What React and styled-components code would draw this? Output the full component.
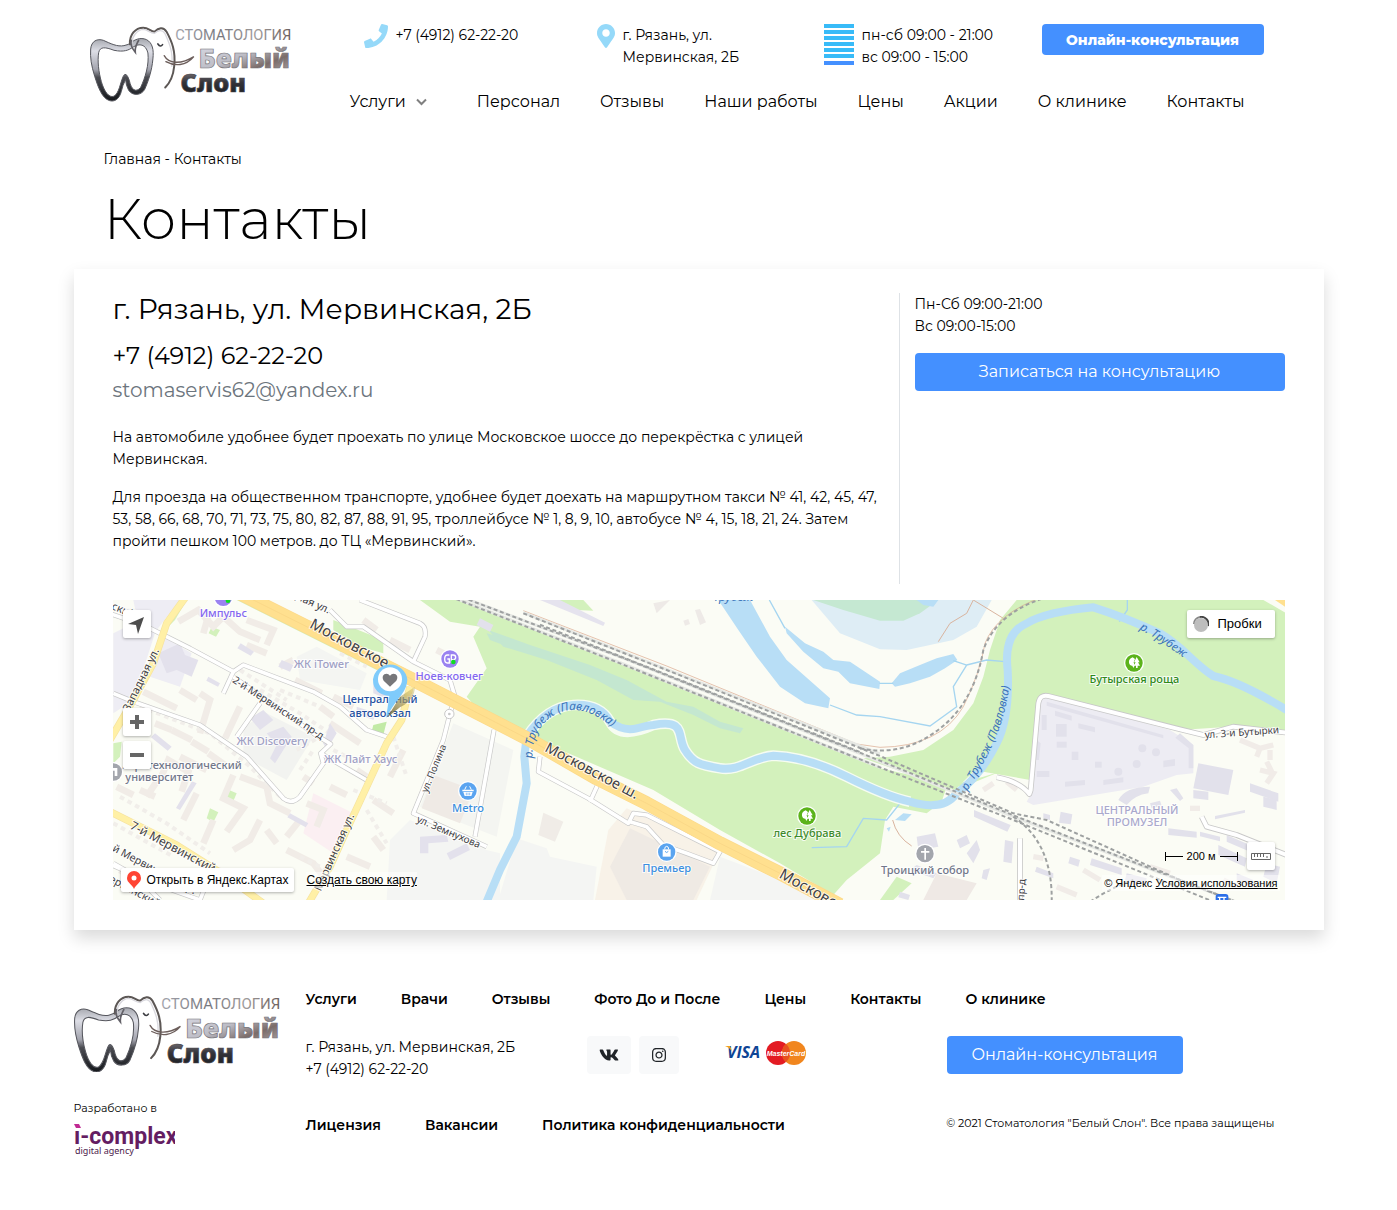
import styled, { createGlobalStyle } from "styled-components";
import { FaPhone, FaMapMarkerAlt, FaVk, FaInstagram } from "react-icons/fa";

const menu = ["Персонал", "Отзывы", "Наши работы", "Цены", "Акции", "О клинике", "Контакты"]
const footerMenu = ["Услуги", "Врачи", "Отзывы", "Фото До и После", "Цены", "Контакты", "О клинике"]
const documents = ["Лицензия", "Вакансии", "Политика конфиденциальности"]

export default function App() {
    return (
        <>
            <GlobalStyle />
            <Container>
                <Header />
                <main>
                    <Breadcrumbs aria-label="Навигация">
                        <a href="#">Главная</a> - <span>Контакты</span>
                    </Breadcrumbs>
                    <Title>Контакты</Title>
                    <ContactCard />
                </main>
                <Footer />
            </Container>
        </>
    )
}

function Header() {
    return (
        <HeaderBody>
            <HeaderLogo href="#"><Logo id="head" /></HeaderLogo>
            <div>
                <TopBar>
                    <TopItem>
                        <FaPhone size={24} color="#95d9f9" />
                        <a href="tel:+74912622220">+7 (4912) 62-22-20</a>
                    </TopItem>
                    <TopItem>
                        <MarkerIcon size={24} color="#95d9f9" />
                        <Address>г. Рязань, ул. Мервинская, 2Б</Address>
                    </TopItem>
                    <TopItem>
                        <svg width="30" height="41" aria-hidden="true">
                            {[0, 6, 12, 18, 24, 30].map((y) => <rect key={y} y={y} width="30" height="4" fill="#38bbf8" />)}
                            <rect y="37" width="30" height="4" fill="#4490ff" />
                        </svg>
                        <p>пн-сб 09:00 - 21:00<br />вс 09:00 - 15:00</p>
                    </TopItem>
                    <SmallButton type="button">Онлайн-консультация</SmallButton>
                </TopBar>
                <Nav>
                    <NavToggle type="button" aria-haspopup="true">
                        Услуги
                        <svg width="11" height="8" viewBox="0 0 11 8" aria-hidden="true">
                            <path d="M1 1.5 5.5 6 10 1.5" fill="none" stroke="#808080" strokeWidth="2" />
                        </svg>
                    </NavToggle>
                    {menu.map((item) => <a key={item} href="#">{item}</a>)}
                </Nav>
            </div>
        </HeaderBody>
    )
}

function ContactCard() {
    return (
        <Card>
            <CardColumns>
                <Info>
                    <h2>г. Рязань, ул. Мервинская, 2Б</h2>
                    <Phone href="tel:+74912622220">+7 (4912) 62-22-20</Phone>
                    <Mail href="mailto:stomaservis62@yandex.ru">stomaservis62@yandex.ru</Mail>
                    <p>
                        На автомобиле удобнее будет проехать по улице Московское шоссе до перекрёстка с улицей
                        Мервинская.
                    </p>
                    <p>
                        Для проезда на общественном транспорте, удобнее будет доехать на маршрутном такси № 41, 42, 45, 47,
                        53, 58, 66, 68, 70, 71, 73, 75, 80, 82, 87, 88, 91, 95, троллейбусе № 1, 8, 9, 10, автобусе № 4, 15, 18, 21, 24. Затем
                        пройти пешком 100 метров. до ТЦ «Мервинский».
                    </p>
                </Info>
                <Schedule>
                    <p>Пн-Сб 09:00-21:00<br />Вс 09:00-15:00</p>
                    <Button type="button">Записаться на консультацию</Button>
                </Schedule>
            </CardColumns>
            <MapBlock />
        </Card>
    )
}

function Footer() {
    return (
        <FooterBody>
            <FooterSide>
                <a href="#"><Logo id="foot" /></a>
                <Developer href="#">
                    Разработано в
                    <AgencyLogo />
                </Developer>
            </FooterSide>
            <div>
                <FooterNav>
                    {footerMenu.map((item) => <a key={item} href="#">{item}</a>)}
                </FooterNav>
                <FooterRow>
                    <p>г. Рязань, ул. Мервинская, 2Б<br />+7 (4912) 62-22-20</p>
                    <Social>
                        <a href="#" aria-label="ВКонтакте"><FaVk size={20} /></a>
                        <a href="#" aria-label="Instagram"><FaInstagram size={16} /></a>
                    </Social>
                    <Cards />
                    <Button type="button">Онлайн-консультация</Button>
                </FooterRow>
                <FooterBottom>
                    <FooterNav>
                        {documents.map((item) => <a key={item} href="#">{item}</a>)}
                    </FooterNav>
                    <small>© 2021 Стоматология "Белый Слон". Все права защищены</small>
                </FooterBottom>
            </div>
        </FooterBody>
    )
}

function Logo({ id }) {
    return (
        <svg viewBox="58 42 604 230" width="100%" role="img" aria-label="Стоматология Белый Слон">
            <defs>
                <linearGradient id={id + "-tooth"} x1="0" y1="0" x2="0" y2="1">
                    <stop offset="0" stopColor="#a5a7ae" />
                    <stop offset=".2" stopColor="#dddee6" />
                    <stop offset=".5" stopColor="#a2a3ad" />
                    <stop offset=".62" stopColor="#4b4c52" />
                    <stop offset="1" stopColor="#15181c" />
                </linearGradient>
                <linearGradient id={id + "-word"} x1="0" y1="0" x2="1" y2="0">
                    <stop offset="0" stopColor="#a3a4ac" />
                    <stop offset=".4" stopColor="#77777e" />
                    <stop offset=".7" stopColor="#a09c9c" />
                    <stop offset="1" stopColor="#6c5f5c" />
                </linearGradient>
                <linearGradient id={id + "-white"} x1="0" y1="0" x2="1" y2="1">
                    <stop offset="0" stopColor="#dcdce6" />
                    <stop offset=".45" stopColor="#bdbdc6" />
                    <stop offset=".7" stopColor="#7b6c69" />
                    <stop offset="1" stopColor="#b5aeb0" />
                </linearGradient>
                <linearGradient id={id + "-dark"} x1="0" y1="0" x2="0" y2="1">
                    <stop offset="0" stopColor="#9c9498" />
                    <stop offset=".5" stopColor="#34343a" />
                    <stop offset="1" stopColor="#12161a" />
                </linearGradient>
            </defs>
            <path
                fill={"url(#" + id + "-tooth)"} stroke="#55565d" strokeWidth="3" fillRule="evenodd"
                d="M60 114C62 90 80 82 98 88C120 98 140 108 160 104Q174 102 182 94C198 82 214 80 228 86C246 96 250 116 247 144C244 180 232 214 222 236C212 254 186 256 174 238Q166 224 165 206Q156 222 152 242C146 266 130 274 116 269C94 262 82 228 72 196C62 164 58 140 60 114ZM84 125C80 150 84 184 92 212C100 240 114 262 130 256C146 246 148 218 158 196Q166 180 176 208C182 238 196 246 210 230C224 200 236 162 232 126C226 100 206 96 188 108C174 118 160 124 130 118C104 108 88 106 84 125Z"
            />
            <g fill="none" strokeLinecap="round">
                <path d="M178 100C176 72 194 50 218 50C234 50 240 62 252 62C264 50 278 46 288 62C304 92 316 120 311 166C308 196 296 218 284 230" stroke="#5c5755" strokeWidth="6" />
                <path d="M184 96C184 76 200 56 218 55C232 56 238 67 252 67C262 58 274 54 283 67C297 98 308 122 304 166" stroke="#d9d8de" strokeWidth="4" />
                <path d="M182 88C178 102 184 112 194 124C192 108 198 100 204 88" stroke="#626067" strokeWidth="5" />
                <path d="M262 99Q270 110 276 101" stroke="#3c3d42" strokeWidth="5" />
                <path d="M281 134C294 158 330 162 370 137C346 166 312 166 286 152" stroke="#6c5e5b" strokeWidth="4" />
            </g>
            <text x="314" y="86" fontFamily="Roboto, sans-serif" fontSize="44" fill={"url(#" + id + "-word)"}>СТОМАТОЛОГИЯ</text>
            <g fontFamily="'Noto Sans', sans-serif" fontWeight="900">
                <text x="384" y="172" fontSize="80" fill={"url(#" + id + "-white)"} stroke="#77757b" strokeWidth="2">Белый</text>
                <text x="330" y="244" fontSize="76" fill={"url(#" + id + "-dark)"} stroke="#4a484d" strokeWidth="2">Слон</text>
            </g>
        </svg>
    )
}

function AgencyLogo() {
    return (
        <svg width="101" height="38" viewBox="0 0 101 38" role="img" aria-label="i-complex digital agency">
            <path d="M0 5h5l2 4H2z" fill="#c02a92" />
            <text x="0" y="25" fontFamily="Roboto, sans-serif" fontWeight="700" fontSize="23" fill="#641d62">ı-complex</text>
            <text x="1" y="35" fontFamily="'Noto Sans', sans-serif" fontSize="9" fill="#4b1a4b">digital agency</text>
        </svg>
    )
}

function Cards() {
    return (
        <CardsIcon width="82" height="26" viewBox="0 0 82 26" role="img" aria-label="Visa, MasterCard">
            <text x="2" y="18" fontFamily="'Open Sans', sans-serif" fontSize="16" fontWeight="700" fontStyle="italic" fill="#0e4595">VISA</text>
            <path d="M0 6h5l2 5Q4 7 0 6z" fill="#f2a51f" />
            <circle cx="53" cy="13" r="12" fill="#e31b23" />
            <circle cx="69" cy="13" r="12" fill="#f1861e" />
            <path d="M61 4a12 12 0 0 1 0 18a12 12 0 0 1 0 -18" fill="#e8501f" />
            <text x="61" y="16" textAnchor="middle" fontFamily="'Liberation Sans', sans-serif" fontSize="7" fontWeight="700" fontStyle="italic" fill="#fff">MasterCard</text>
        </CardsIcon>
    )
}

function MapBlock() {
    return (
        <MapBody>
            <MapCanvas />
            <MapTools>
                <MapButton type="button" aria-label="Моё местоположение">
                    <svg width="28" height="28"><path d="M5 14 21 7 15 24 13 15z" fill="#4d4d4d" /></svg>
                </MapButton>
                <Zoom>
                    <MapButton type="button" aria-label="Приблизить">
                        <svg width="28" height="28"><path d="M12 7h4v5h5v4h-5v5h-4v-5H7v-4h5z" fill="#666" /></svg>
                    </MapButton>
                    <MapButton type="button" aria-label="Отдалить">
                        <svg width="28" height="28"><path d="M7 12h14v4H7z" fill="#666" /></svg>
                    </MapButton>
                </Zoom>
            </MapTools>
            <Traffic type="button">
                <svg width="16" height="16" aria-hidden="true">
                    <path d="M1 8A7 7 0 0 1 7 1" fill="none" stroke="#888" strokeWidth="2" />
                    <path d="M7 1A7 7 0 0 1 15 10" fill="none" stroke="#444" strokeWidth="2" />
                    <circle cx="8" cy="9" r="7" fill="#bdbdbd" />
                </svg>
                Пробки
            </Traffic>
            <MapLinks>
                <OpenMap href="#">
                    <svg width="14" height="20" viewBox="0 0 14 20" aria-hidden="true">
                        <path d="M7 1a7 7 0 0 1 7 7c0 5-5 6-7 11C5 14 0 13 0 8a7 7 0 0 1 7-7z" fill="#f43" />
                        <circle cx="7" cy="8" r="2.5" fill="#fff" />
                    </svg>
                    Открыть в Яндекс.Картах
                </OpenMap>
                <a href="#">Создать свою карту</a>
            </MapLinks>
            <MapScale>
                <svg width="18" height="9"><path d="M.5 0v9M0 4.5h18" stroke="#000" /></svg>
                200 м
                <svg width="18" height="9"><path d="M17.5 0v9M0 4.5h18" stroke="#000" /></svg>
                <MapButton type="button" aria-label="Линейка">
                    <svg width="28" height="28"><path d="M4.500 11.500h19v6h-19zM7.500 12v3M10.500 12v3M13.500 12v3M16.500 12v3M20 14v2" fill="none" stroke="#666" /></svg>
                </MapButton>
            </MapScale>
            <MapCopyright>© Яндекс <a href="#">Условия использования</a></MapCopyright>
        </MapBody>
    )
}

// three map units per pixel, the map is cut into west / centre / east tiles
const westBuildings = [
    "M235 95l60-35 45 50 30-30 50 45 60 25", "M330 60l-20 70", "M440 90l80 30-20 45", "M440 165l60 25",
    "M130 305l100 50", "M165 400l50 20", "M215 420l60 30", "M275 455l50 30", "M325 490l50 35", "M180 570l25-60 60 35-20 60",
    "M300 310l30 20-30 100", "M420 350l-45 95", "M240 500l80 40", "M400 555l-30 70 60 30-50 70", "M420 560l80 30 10 50 60 30",
    "M400 780l50-30 30-60", "M290 610l-40 80", "M310 760l30-70", "M50 590l50 25", "M120 600l45 20",
    "M585 270l80 40", "M700 320l60 30", "M690 400l90 60", "M610 560l30 20", "M690 590l50 25", "M600 690l-40 50", "M790 90l40 30",
    "M870 150l60 30", "M770 540l30 20", "M820 630l60 40", "M740 800l70 30", "M820 740l30 40", "M140 620l40-60", "M240 300l50 30",
    "M560 780l80 40 30 40", "M320 830l90 30", "M500 720l30 40", "M620 640l50 20-20 50", "M60 840l60 40", "M540 230l40-20",
    "M870 560l40-80", "M1010 180l40 20", "M660 350l40 30",
]
const westLilac = [
    "M175 190l65-30 15 35 40 15-20 50-45-20-30 10z", "M450 385l40-25 30 30-40 30z", "M500 430l50-20 25 30-50 80-15-15 20-40z",
    "M422 160l40 25-10 12-40-22z", "M545 210l35 15-10 20-35-15z", "M960 740l80-5 5 20-60 5 0 30-25 0z", "M1040 790l60-30 10 20-60 30z",
    "M820 280l60 20-10 30-50-20z", "M770 350l60 20-10 20-50-20z", "M690 400l20 30-30 50-10-20z", "M1140 85l40 20-10 20-40-20z",
    "M165 430l50 40-12 12-50-40z", "M290 580l-50 80-12-6 48-80z", "M570 670l55 30-8 12-55-30z", "M325 260l35 20-6 10-35-18z",
]
const eastBuildings = [
    "M985 520l105 20-15 75-105-20z", "M572 665l35 8-5 30-35-5z", "M312 660l110 45-10 20-100-45z", "M405 750l25 5-5 65-25-5z",
    "M745 630q20-40 95-40l-5 20q-40 5-65 35z", "M900 600l20-5 20 30-10 8z", "M970 600l45 5 0 25-45-5z", "M1140 580l85 30 0 25-85-30z",
    "M1180 620l40 10 0 30-40-10z", "M1035 678l90-18 0 8-90 20z", "M895 715l85 10 0 18-85-8z", "M990 725l60 15 0 14-60-15z",
    "M1070 735l70 30 0 20-70-30z", "M1045 765l85 40-5 25-80-35z", "M665 805l90 30 0 20-95-30z", "M770 850l60 15-5 20-60-15z",
    "M140 740l55-10 10 40-60 10z", "M260 750l30-15 10 25-30 15z", "M290 790l30-40 10 30-20 40z", "M120 840l20-15 60 25-10 15z",
    "M340 840l20-5-10 35-15-5z", "M90 905l30 10-5 15-30-8z", "M1190 820l40 10-10 50-40-20z", "M1100 850l50 20 0 20-50-20z",
    "M520 670l20 5 0 15-20-5z", "M600 800l30 10-5 20-30-10z", "M500 830l50 20 0 15-55-20z", "M840 640l30-8 5 15-30 8z",
]
const eastInner = [
    "M515 375h15v45h-15z", "M555 362l50 15v15l-50-15z", "M558 402h32v38h-32z", "M625 400l50 12v15l-50-12z", "M560 455h30v18h-30z",
    "M500 543h38v18h-38z", "M605 485h20v25h-20z", "M675 515h20v18h-20z", "M585 575l60-5v15l-60 5z", "M700 570l60-8v15l-60 8z",
    "M880 512l35-5v20l-35 5z", "M530 335l350 100v10l-350-98z", "M930 430l40 35v70l-14 0v-60l-40-32z", "M500 450l12 10-5 50-10 0z",
]
const eastBeige = [
    "M1110 450l60 25 40-10M1170 475l-10 25", "M1170 540l40 10-20 30M1190 515l15 30", "M340 600l30-20", "M410 575l30 25",
    "M640 840l50 30", "M960 655h30", "M840 830l60 20", "M1060 870l40 20", "M560 890l60 25", "M1200 480v30", "M490 800l30 5",
]
const eastSpots = [[817, 475], [858, 487], [800, 522], [745, 545]]
const roads = [
    "M-60 40L130 105L270 175L400 245L430 225L640 305L720 350L800 420L860 440",
    "M400 245L370 310", "M40 310L100 335L300 405L440 500L550 625Q575 645 600 620L670 520L662 490L692 462L640 430L400 260M480 340L410 440",
    "M662 490L800 570", "M690 60L740 110L790 110L940 215L1050 270L1065 320L1050 370",
    "M780 30L960 100Q980 110 975 140L940 215", "M1050 370L1030 450L940 670L1160 770", "M1182 420L1125 740",
    "M-20 800L160 880L300 930", "M180 930L110 860L40 820", "M340 830L300 930",
    "M1320 500L1315 545L1465 625L1585 700L1600 670L1640 675L1860 785L1840 820L1760 790L1690 765L1640 710L1590 695", "M1495 580L1470 635",
]
const highway = "M400 0L640 120L940 270L1290 450L1490 565L1640 640L1860 760L2040 850L2220 945"

function Poi({ x, y, color, children }) {
    return (
        <g transform={`translate(${x} ${y})`}>
            <circle r="30" fill="#fff" />
            <circle r="26" fill={color} />
            <g fill="#fff">{children}</g>
        </g>
    )
}

function Trees() {
    return (
        <>
            <path d="M-4-17Q-17-12-15 0Q-13 9-5 8L-2 15L2 8L-1-2L3-12z" />
            <path d="M8-18L0-2h5L-1 8h7v7h5V8h7L12-2h5z" />
        </>
    )
}

function MapCanvas() {
    return (
        <svg viewBox="0 0 3516 900" preserveAspectRatio="xMidYMid slice" width="100%" height="300" role="img" aria-label="Карта проезда">
            <defs>
                <path id="river-west" d="M158 505C152 420 210 365 275 360C320 360 350 372 420 430" />
                <path id="river-east" d="M292 604C340 520 400 430 418 290L428 150" />
                <path id="river-north" d="M808 118Q870 150 980 232" />
            </defs>
            <rect width="3516" height="900" fill="#fbfcf5" />

            {/* ground */}
            <g transform="translate(-39 -30)">
                <path d="M40 130L120 90L165 130L100 330L40 370z" fill="#eeedf4" />
                <path d="M190 140L275 190L240 290L150 260z" fill="#eeedf4" />
                <path d="M100 30H240L170 120L110 80z" fill="#eeedf4" />
                <path d="M430 410L500 370L640 440L560 570L430 500z" fill="#f2f3f0" />
                <path d="M590 200L650 170L800 250L780 300L600 270z" fill="#f4f5f2" />
                <path d="M870 750L930 690L1160 780L1200 790V930H860z" fill="#f4f5f3" />
                <path d="M1060 400L1240 480L1190 740L960 650z" fill="#f4f5f1" />
                <path d="M640 610L760 670L700 790L610 730z" fill="#fbeff2" />
                <path d="M205 110L240 30H260L225 90z" fill="#d3f1bc" />
                <path d="M410 30L450 30L840 225L830 240L660 155z" fill="#d3f1bc" />
                <path d="M700 90L850 150L850 190L780 170L700 120z" fill="#d3f1bc" />
                <path d="M820 405L860 395L850 435L815 425z" fill="#c2eaa6" />
                <path d="M335 110l25 10-12 20-22-10zM375 595l35 15-15 35-30-15zM330 655l25 12-15 30-20-12zM40 460l25-5-5 45-20 20z" fill="#d3f1bc" />
            </g>
            <g transform="translate(1101 -30)">
                <path d="M-180 30H-50L440 225L1200 535L1450 590L1560 545L1510 560L1400 590L1385 635L1340 670L1240 650L1215 690L1200 790L1100 870L1060 915L900 820L720 720L520 600L150 440L0 365L-40 320L20 235L-20 140L0 110L-90 95z" fill="#d3f1bc" />
                <path d="M235 30H310L340 62L290 60z" fill="#d3f1bc" />
                <path d="M110 745L200 775L210 800L350 830L340 930H55z" fill="#f4f5f3" />
                <path d="M720 800L1060 930H690z" fill="#f4f5f3" />
                <path d="M440 655L720 780L650 930H345L385 720z" fill="#f8f2e8" />
                <path d="M450 715L690 830L640 930H440L390 830z" fill="#efeae4" />
                <path d="M190 668L250 695L225 755L175 735z" fill="#f0ece7" />
                <path d="M180 30H240L375 98L370 108z" fill="#e5e3ee" />
                <path d="M520 40l50-10 -40 40zM645 60l15-3 18 40-18 8zM610 92l15-5 5 15-15 5z" fill="#eeeae7" />
            </g>
            <g transform="translate(2271 -30)">
                <path d="M440 30H1180L1250 70V425L1080 410L930 420L530 318L505 330L480 570L340 545L310 545L255 600L-20 505L60 500L160 480L250 420L310 340L340 260L360 180L390 90z" fill="#d3f1bc" />
                <path d="M505 330L540 320L900 420L970 465V550L920 555L820 590L490 645L470 635L490 600z" fill="#edecf3" />
                <path d="M80 860L125 880L70 930H30z" fill="#d3f1bc" />
                <path d="M200 850L320 880L290 930H160z" fill="#efe9e5" />
                <path d="M1215 30H1245V50z" fill="#ffe08f" />
            </g>

            {/* water */}
            <g transform="translate(1101 -30)" fill="#b8def6">
                <path d="M995 30L1080 130L1200 178L1280 180L1420 150L1490 110L1535 30z" fill="#deedf5" />
                <path d="M1000 30L1090 60L1200 92H1270L1320 70L1375 30z" fill="#c5e8d2" />
                <path d="M25 120L150 165L330 225L440 270L560 335L640 350L720 395L790 415L780 430L720 415L640 375L540 335L460 330L350 270L200 210L70 170z" fill="#c4e7d0" />
                <path d="M20 130L60 140L70 165L30 150z" fill="#c4e7d0" />
                <path d="M715 30H810L870 140L920 210L1050 325L1045 355L975 340L900 290L830 200L775 120z" />
                <path d="M915 110L975 160L1030 185L1060 210L1110 215L1200 275L1198 297L1110 280L1075 245L1030 235L970 185L920 130z" />
                <path d="M1235 280L1260 250L1320 225L1370 205L1420 192L1432 210L1395 235L1350 260L1290 280L1245 290z" />
                <path d="M1310 30h65l-15 20-30-5zM1245 690l25-20 25 3-20 20zM1220 715l12-5-5 15z" />
                <g fill="none" stroke="#a5d5f0" strokeWidth="4">
                    <path d="M868 30L915 115M1050 345L1130 375L1200 380L1350 408L1430 350L1420 290L1460 225L1420 212M1460 225L1520 210L1575 215" />
                    <path d="M995 773L1100 770L1150 685L1220 690L1260 640M1918 95L1942 60V30M1198 280H1240" />
                </g>
                <path
                    fill="none" stroke="#fff" strokeWidth="32" opacity=".8"
                    d="M140 440Q200 350 280 345T390 395T520 405C620 385 590 440 615 480S660 525 720 535S820 500 880 497Q980 500 1100 560T1290 635"
                />
                <path
                    fill="none" stroke="#b8def6" strokeWidth="24"
                    d="M20 935L60 840L110 740L125 660L140 580L133 500L140 440Q200 350 280 345T390 395Q430 425 470 415T520 405C620 385 590 440 615 480S660 525 720 535S820 500 880 497Q980 500 1100 560T1290 635Q1390 665 1430 610Q1500 560 1550 460Q1590 380 1583 240Q1570 130 1640 100Q1700 65 1840 52Q1930 80 2040 130C2110 170 2140 220 2200 258Q2280 275 2420 360"
                />
            </g>

            {/* buildings */}
            <g transform="translate(-39 -30)">
                <g fill="none" stroke="#f1ece7" strokeWidth="20">
                    {westBuildings.map((d) => <path key={d} d={d} />)}
                </g>
                <g fill="none" stroke="#f1eeea" strokeWidth="12" strokeDasharray="14 12">
                    <path d="M120 350L330 430L450 530L540 620M480 300L600 370L690 430M60 620L200 700L330 790M700 480L780 520M420 240L560 330M720 190L800 230M600 800L680 840" />
                    <path d="M590 480L660 440M600 540L640 480M40 700L220 800M760 600L860 640M800 660L860 760M540 300L660 350M880 440L920 560" />
                </g>
                <g fill="#e3e1ec">{westLilac.map((d) => <path key={d} d={d} />)}</g>
                <path d="M1000 555L1120 600L1080 700L965 655z" fill="#efeae5" />
            </g>
            <g transform="translate(2271 -30)">
                <g fill="#e2e1eb">
                    {eastBuildings.map((d) => <path key={d} d={d} />)}
                    {eastInner.map((d) => <path key={d} d={d} />)}
                    {eastSpots.map(([x, y]) => <circle key={x} cx={x} cy={y} r="12" />)}
                </g>
                <g fill="none" stroke="#f1ece8" strokeWidth="16">
                    {eastBeige.map((d) => <path key={d} d={d} />)}
                </g>
            </g>

            {/* streets */}
            <g transform="translate(-39 -30)" fill="none" strokeLinejoin="round">
                {[["#c8c8c8", 15], ["#fff", 11]].map(([color, width]) => (
                    <g key={color} stroke={color} strokeWidth={width}>
                        {roads.map((d) => <path key={d} d={d} />)}
                    </g>
                ))}
                {[["#f6e3a0", 22], ["#fff0a6", 18]].map(([color, width]) => (
                    <g key={color} stroke={color} strokeWidth={width}>
                        <path d="M265 10L200 100L160 220L100 330L30 450" />
                        <path d="M930 290L905 390L860 460L800 590L740 720L690 830L625 940" />
                        <path d="M20 660L230 765L380 860L490 940" />
                    </g>
                ))}
                <path d={highway} stroke="#fcd98a" strokeWidth="42" />
                <path d={highway} stroke="#ffe08f" strokeWidth="38" />
                <path d={highway} stroke="#f8d384" strokeWidth="2" />
                <circle cx="1048" cy="372" r="14" fill="#fff" stroke="#c8c8c8" strokeWidth="3" />
                <circle cx="1048" cy="372" r="4" fill="#c8c8c8" />
            </g>
            <g transform="translate(2271 -30)" fill="none" strokeLinejoin="round">
                {[["#c8c8c8", 17], ["#fff", 12]].map(([color, width]) => (
                    <g key={color} stroke={color} strokeWidth={width}>
                        <path d="M380 562Q450 575 478 612L482 600L505 340Q510 312 535 318L930 418L1000 435L1090 410L1250 428" />
                        <path d="M450 745V940M995 680L1010 710L1100 735L1250 795" />
                    </g>
                ))}
                <path d="M205 155L240 100L290 70L310 30L400 85M68 690Q80 740 125 768" stroke="#d9b49f" strokeWidth="3" />
            </g>

            {/* railway */}
            <g transform="translate(1101 -30)" fill="none">
                <path d="M130 62L560 228L1130 462L1200 472Q1380 470 1450 350Q1500 250 1515 160Q1550 70 1690 20" stroke="#d9a58a" strokeWidth="2" />
                <g stroke="#e6e8e4" strokeWidth="9">
                    <path d="M-90 8L440 208L1200 515L1600 680L2280 940M-90 18L430 222L1200 532M130 68L560 238L1200 492" />
                </g>
                <g stroke="#9ea1a1" strokeWidth="6" strokeDasharray="12 8">
                    <path d="M-90 8L440 208L1200 512L1600 676L2280 940" />
                    <path d="M-90 20L430 224L1200 532L1600 690L2200 935" />
                    <path d="M130 70L560 240L1200 498L1600 670L1700 690L2100 870L2280 940" />
                    <path d="M180 104L560 254L1140 486" />
                    <path d="M1140 475Q1260 500 1360 430Q1480 350 1510 180Q1550 70 1690 25" />
                    <path d="M1600 680Q1720 760 1715 940M1830 935Q1900 890 1960 870" />
                </g>
            </g>

            {/* labels */}
            <Labels transform="translate(-39 -30)">
                <Street size="45" transform="translate(626 112) rotate(28)">Московское</Street>
                <Street size="32" transform="translate(570 20) rotate(24)">дная ул.</Street>
                <Street size="33" transform="translate(88 366) rotate(-64)">Западная ул.</Street>
                <Street size="31" transform="translate(395 275) rotate(33)">2-й Мервинский пр-д</Street>
                <Street size="36" transform="translate(88 715) rotate(28)">7-й Мервинский пр-д</Street>
                <Street size="32" transform="translate(10 768) rotate(28)">1-й Мервинский пр.</Street>
                <Street size="32" transform="translate(0 860) rotate(28)">Мервинский пр-д</Street>
                <Street size="32" transform="translate(15 50) rotate(22)">нский</Street>
                <Street size="33" transform="translate(662 905) rotate(-66)">Мервинская ул.</Street>
                <Street size="29" transform="translate(982 610) rotate(-68)">ул. Полина</Street>
                <Street size="30" transform="translate(948 695) rotate(23)">ул. Земнухова</Street>
                <Place color="#8468f0" x="370" y="80">Импульс</Place>
                <Place color="#9fa0c4" x="664" y="233">ЖК iTower</Place>
                <Place color="#9fa0c4" x="516" y="465">ЖК Discovery</Place>
                <Place color="#9fa0c4" x="782" y="519">ЖК Лайт Хаус</Place>
                <Place color="#71778a" x="246" y="536">Агротехнологический</Place>
                <Place color="#71778a" x="178" y="574">университет</Place>
                <Place color="#8468f0" x="1048" y="271">Ноев-ковчег</Place>
                <Place color="#2350a0" x="840" y="340">Центральный</Place>
                <Place color="#2350a0" x="840" y="380">автовокзал</Place>
                <Place color="#3b8fe0" x="1104" y="667">Metro</Place>
            </Labels>
            <Labels transform="translate(1101 -30)">
                <Street size="43" transform="translate(192 482) rotate(28)">Московское ш.</Street>
                <Street size="45" transform="translate(895 862) rotate(29)">Московское</Street>
                <River><textPath href="#river-west">р. Трубеж (Павловка)</textPath></River>
                <River x="700" y="34">Трубеж</River>
                <Place color="#3b8fe0" x="560" y="846">Премьер</Place>
                <Place color="#3d8a2b" x="982" y="740">лес Дубрава</Place>
            </Labels>
            <Labels transform="translate(2271 -30)">
                <River><textPath href="#river-east">р. Трубеж (Павловка)</textPath></River>
                <River><textPath href="#river-north">р. Трубеж</textPath></River>
                <Street size="30" transform="translate(1005 445) rotate(-4)">ул. 3-и Бутырки</Street>
                <Street size="30" transform="translate(462 932) rotate(-86)">пр-д</Street>
                <Place color="#2f8a1b" x="793" y="279">Бутырская роща</Place>
                <Place color="#a9a8cc" x="801" y="671">ЦЕНТРАЛЬНЫЙ</Place>
                <Place color="#a9a8cc" x="801" y="707">ПРОМУЗЕЛ</Place>
                <Place color="#71778a" x="165" y="853">Троицкий собор</Place>
            </Labels>

            {/* points of interest */}
            <g transform="translate(-39 -30)">
                <Poi x={370} y={22} color="#9a82f0"><circle cx="14" cy="10" r="7" fill="#0fdc22" /></Poi>
                <Poi x={1050} y={207} color="#9a82f0">
                    <path d="M-2-12h-6q-8 0-8 12t8 12h6V0h-6M4 12v-24h6q7 0 7 7t-7 7H4" fill="none" stroke="#fff" strokeWidth="4" />
                    <circle cx="10" cy="9" r="7" fill="#0fdc22" />
                </Poi>
                <Poi x={1104} y={603} color="#5aa4f0">
                    <path d="M-17-4h34v5h-34zM-14 3h28l-4 12h-20z" />
                    <path d="M-10-4l5-10M10-4l-5-10" stroke="#fff" strokeWidth="3" />
                    <path d="M-5 5v8M0 5v8M5 5v8" stroke="#5aa4f0" strokeWidth="2" />
                </Poi>
                <Poi x={40} y={546} color="#a3a6ad"><path d="M-8-12h20v24H4V-4h-12z" /></Poi>
                <linearGradient id="pin-shadow" x1="0" y1="1" x2="1" y2="0">
                    <stop offset="0" stopColor="#6d6236" stopOpacity=".9" />
                    <stop offset="1" stopColor="#d8c878" stopOpacity=".5" />
                </linearGradient>
                <path d="M862 382L900 320L945 290Q944 330 900 352z" fill="url(#pin-shadow)" />
                <path d="M858 385L868 318Q818 312 819 268A52 52 0 0 1 922 268Q922 292 904 315Q874 352 858 385z" fill="#7fcbfb" />
                <circle cx="870" cy="268" r="36" fill="#fff" />
                <path d="M870 290L851 272Q844 260 853 253Q863 248 870 257Q877 248 887 253Q896 260 889 272z" fill="#77777a" />
            </g>
            <g transform="translate(1101 -30)">
                <Poi x={560} y={786} color="#5aa4f0">
                    <path d="M-12-8h24v22h-24z" />
                    <path d="M-6-8q0-9 6-9t6 9" fill="none" stroke="#fff" strokeWidth="3" />
                    <path d="M-5-2q5 7 10 0" fill="none" stroke="#5aa4f0" strokeWidth="3" />
                </Poi>
                <Poi x={981} y={678} color="#5bb31a"><Trees /></Poi>
            </g>
            <g transform="translate(2271 -30)">
                <Poi x={792} y={219} color="#5bb31a"><Trees /></Poi>
                <Poi x={165} y={791} color="#a3a6ad"><path d="M-2-17h5v9h10v5H3v21h-5V-3h-10v-5h10z" /></Poi>
                <rect x="1037" y="912" width="38" height="30" rx="8" fill="#2c6fe8" />
                <path d="M1043 922h26M1049 922v10M1062 922v10" stroke="#fff" strokeWidth="4" />
            </g>
        </svg>
    )
}

const GlobalStyle = createGlobalStyle`
    * {
        box-sizing: border-box;
    }

    body {
        margin: 0;
        background-color: #ffffff;
        color: #000000;
        font-family: 'Montserrat', 'Inter', sans-serif;
        font-size: 14px;
        line-height: 22px;
    }

    h1, h2, p {
        margin: 0;
        font-weight: 400;
    }

    a {
        color: inherit;
        text-decoration: none;
    }

    button {
        border: none;
        padding: 0;
        font: inherit;
        color: inherit;
        cursor: pointer;
    }

    svg {
        display: block;
        flex-shrink: 0;
    }
`

const Container = styled.div`
    max-width: 1250px;
    margin: 0 auto;
`

const HeaderBody = styled.header`
    display: grid;
    grid-template-columns: 201px 1fr;
    column-gap: 59px;
    padding: 24px 60px 0 16px;
`

const HeaderLogo = styled.a`
    padding-top: 1px;
`

const TopBar = styled.div`
    display: grid;
    grid-template-columns: 233fr 227fr 218fr 222px;
    align-items: start;
    min-height: 44px;
    padding-left: 14px;
`

const TopItem = styled.div`
    display: flex;
    align-items: flex-start;
    gap: 8px;
`

const MarkerIcon = styled(FaMapMarkerAlt)`
    width: 18px;
`

const Address = styled.p`
    max-width: 120px;
`

const Button = styled.button`
    height: 38px;
    padding: 0 25px;
    border-radius: 4px;
    background-color: #4490ff;
    color: #ffffff;
    font-size: 16px;
`

const SmallButton = styled(Button)`
    height: 31px;
    padding: 0 12px;
    font-size: 14px;
    font-weight: 800;
`

const Nav = styled.nav`
    display: flex;
    justify-content: space-between;
    align-items: center;
    margin-top: 23px;
    padding-right: 19px;
    font-size: 16px;
    white-space: nowrap;
`

const NavToggle = styled.button`
    display: flex;
    align-items: center;
    gap: 10px;
    padding-right: 10px;
    background: transparent;
`

const Breadcrumbs = styled.nav`
    margin-top: 35px;
    padding-left: 30px;
`

const Title = styled.h1`
    margin: 15px 0 16px;
    padding-left: 30px;
    font-size: 56px;
    font-weight: 300;
    line-height: 68px;
`

const Card = styled.section`
    padding: 24px 39px 30px;
    background-color: #ffffff;
    box-shadow: 0 8px 16px rgba(0, 0, 0, 0.15);
`

const CardColumns = styled.div`
    display: grid;
    grid-template-columns: 1fr 386px;
    min-height: 291px;
    margin-bottom: 16px;
`

const Info = styled.div`
    display: flex;
    flex-direction: column;
    align-items: flex-start;
    padding-right: 15px;

    h2 {
        font-size: 28px;
        line-height: 32px;
    }

    p {
        margin-bottom: 16px;
    }
`

const Phone = styled.a`
    margin-top: 16px;
    font-size: 24px;
    line-height: 30px;
`

const Mail = styled.a`
    margin: 7px 0 24px;
    color: #6c757d;
    font-size: 20px;
    line-height: 24px;
`

const Schedule = styled.div`
    display: flex;
    flex-direction: column;
    gap: 16px;
    padding-left: 15px;
    border-left: 1px solid #dee2e6;
`

const MapBody = styled.div`
    position: relative;
    height: 300px;
    overflow: hidden;
    font-family: 'Liberation Sans', Arial, sans-serif;
    font-size: 12px;
    line-height: 16px;
`

const Labels = styled.g`
    font-family: 'Noto Sans', sans-serif;
    paint-order: stroke;
    stroke: #ffffff;
    stroke-width: 6px;
    stroke-opacity: 0.8;
`

const Street = styled.text`
    fill: #3f4145;
    font-size: ${(props) => props.size}px;
`

const Place = styled.text`
    fill: ${(props) => props.color};
    font-size: 33px;
    font-weight: 500;
    text-anchor: middle;
`

const River = styled.text`
    fill: #3a72b8;
    font-size: 35px;
    font-style: italic;
    stroke: none;
`

const MapTools = styled.div`
    position: absolute;
    top: 10px;
    left: 10px;
    display: flex;
    flex-direction: column;
    gap: 70px;
`

const Zoom = styled.div`
    display: flex;
    flex-direction: column;
    gap: 5px;
`

const MapButton = styled.button`
    width: 28px;
    height: 28px;
    border-radius: 2px;
    background-color: #ffffff;
    box-shadow: 0 1px 3px rgba(0, 0, 0, 0.3);
`

const Traffic = styled(MapButton)`
    position: absolute;
    top: 10px;
    right: 10px;
    display: flex;
    align-items: center;
    gap: 9px;
    width: 88px;
    padding-left: 6px;
    font-size: 13px;
`

const MapLinks = styled.div`
    position: absolute;
    bottom: 8px;
    left: 8px;
    display: flex;
    align-items: center;
    gap: 12px;

    > a:last-child {
        background-color: rgba(255, 255, 255, 0.5);
        text-decoration: underline;
    }
`

const OpenMap = styled.a`
    display: flex;
    align-items: center;
    gap: 6px;
    height: 24px;
    padding: 0 6px;
    border-radius: 2px;
    background-color: #ffffff;
    box-shadow: 0 1px 3px rgba(0, 0, 0, 0.3);
`

const MapScale = styled.div`
    position: absolute;
    right: 10px;
    bottom: 30px;
    display: flex;
    align-items: center;
    gap: 4px;
    font-size: 11px;

    button {
        margin-left: 5px;
    }
`

const MapCopyright = styled.p`
    position: absolute;
    right: 5px;
    bottom: 9px;
    padding: 0 2px;
    background-color: rgba(255, 255, 255, 0.5);
    font-size: 11px;

    a {
        text-decoration: underline;
    }
`

const FooterBody = styled.footer`
    display: grid;
    grid-template-columns: 206px 1fr;
    column-gap: 26px;
    padding: 58px 0 52px;
`

const FooterSide = styled.div`
    display: flex;
    flex-direction: column;
    gap: 25px;
    padding-top: 6px;
`

const Developer = styled.a`
    font-size: 11px;
`

const FooterNav = styled.nav`
    display: flex;
    gap: 44px;
    font-weight: 600;
    white-space: nowrap;
`

const FooterRow = styled.div`
    display: grid;
    grid-template-columns: 281px 138px 222px auto;
    align-items: start;
    justify-content: start;
    margin: 26px 0 34px;
`

const CardsIcon = styled.svg`
    margin-top: 4px;
`

const Social = styled.div`
    display: flex;
    gap: 8px;

    a {
        display: flex;
        align-items: center;
        height: 38px;
        padding: 0 12px;
        border-radius: 4px;
        background-color: #f8f9fa;
        color: #212529;
    }
`

const FooterBottom = styled.div`
    display: flex;
    justify-content: space-between;
    padding-right: 49px;

    small {
        font-size: 11px;
        line-height: 18px;
    }
`
